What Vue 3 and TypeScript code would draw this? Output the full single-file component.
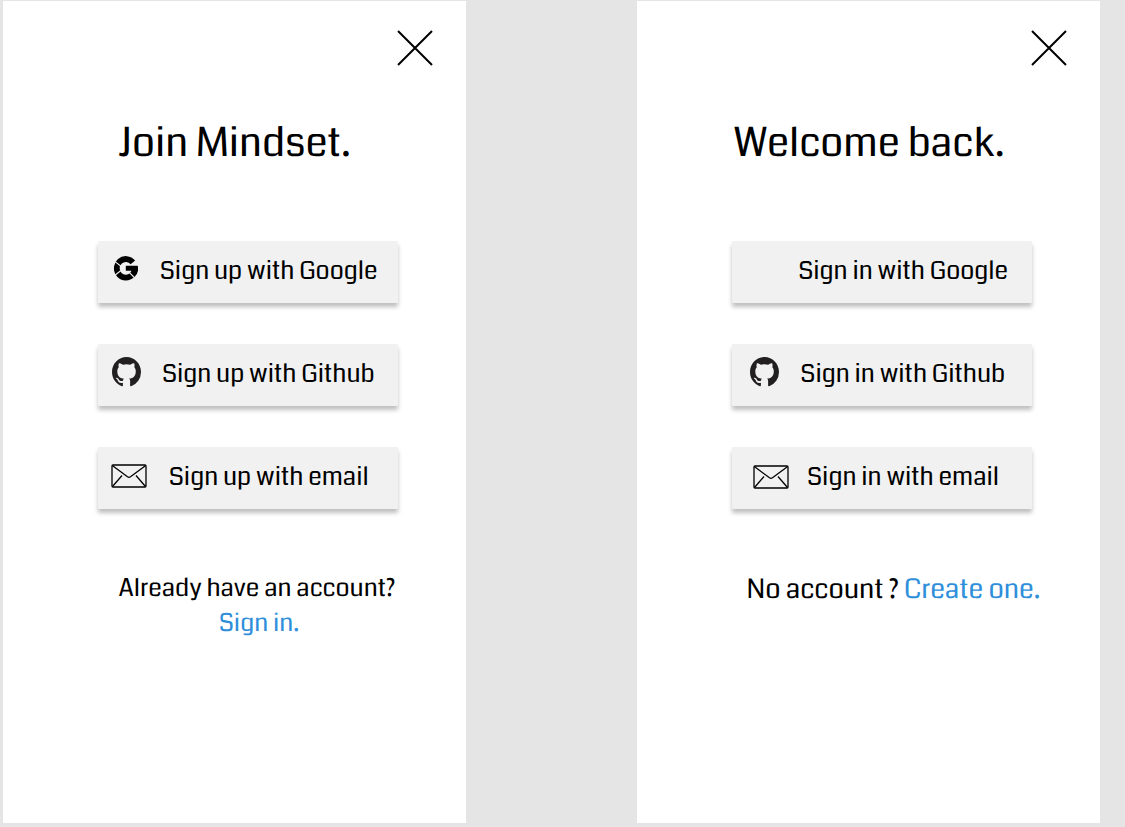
<script setup lang="ts">
type Icon = 'google' | 'github' | 'mail' | 'none'
interface Option { id: string; icon: Icon; label: string }
interface Panel { id: string; title: string; options: Option[]; prompt: string; link: string }

const panels: Panel[] = [
  {
    id: 'join',
    title: 'Join Mindset.',
    options: [
      { id: 'up-google', icon: 'google', label: 'Sign up with Google' },
      { id: 'up-github', icon: 'github', label: 'Sign up with Github' },
      { id: 'up-mail', icon: 'mail', label: 'Sign up with email' },
    ],
    prompt: 'Already have an account?',
    link: 'Sign in.',
  },
  {
    id: 'welcome',
    title: 'Welcome back.',
    options: [
      { id: 'in-google', icon: 'none', label: 'Sign in with Google' },
      { id: 'in-github', icon: 'github', label: 'Sign in with Github' },
      { id: 'in-mail', icon: 'mail', label: 'Sign in with email' },
    ],
    prompt: 'No account ?',
    link: 'Create one.',
  },
]
</script>

<template>
  <main class="board">
    <section v-for="p in panels" :key="p.id" class="panel" :class="p.id">
      <svg class="close" viewBox="0 0 36 36" aria-label="Close">
        <path d="M1 1L35 35M35 1L1 35" fill="none" stroke="#000" stroke-width="2" />
      </svg>
      <h1 class="title">{{ p.title }}</h1>
      <div class="options">
        <button v-for="o in p.options" :key="o.id" class="option" :class="o.id" type="button">
          <span class="icon">
            <svg v-if="o.icon === 'google'" class="google" viewBox="0 0 24 25">
              <path d="M18.9 6.4A9.1 9.3 0 1 0 18.2 19" fill="none" stroke="#000" stroke-width="5.8" />
              <path d="M11.8 9.8H23.7A12 12 0 0 1 20 21.7L15.6 17.2Q16.9 16.4 17.4 14.8H11.8Z" />
              <path d="M1 5.6L7 10.2M1 19.2L6.6 14.8M15 16.2L20.8 22" fill="none" stroke="#f1f1f1" stroke-width="1.1" />
            </svg>
            <svg v-else-if="o.icon === 'github'" class="github" viewBox="0 0 16 16" preserveAspectRatio="none">
              <path fill="#211f1f" d="M8 0C3.58 0 0 3.58 0 8c0 3.54 2.29 6.53 5.47 7.59.4.07.55-.17.55-.38 0-.19-.01-.82-.01-1.49-2.01.37-2.53-.49-2.69-.94-.09-.23-.48-.94-.82-1.13-.28-.15-.68-.52-.01-.53.63-.01 1.08.58 1.23.82.72 1.21 1.87.87 2.33.66.07-.52.28-.87.51-1.07-1.78-.2-3.64-.89-3.64-3.95 0-.87.31-1.59.82-2.15-.08-.2-.36-1.02.08-2.12 0 0 .67-.21 2.2.82.64-.18 1.32-.27 2-.27s1.36.09 2 .27c1.53-1.04 2.2-.82 2.2-.82.44 1.1.16 1.92.08 2.12.51.56.82 1.27.82 2.15 0 3.07-1.87 3.75-3.65 3.95.29.25.54.73.54 1.48 0 1.07-.01 1.93-.01 2.2 0 .21.15.46.55.38A8.01 8.01 0 0 0 16 8c0-4.42-3.58-8-8-8z" />
            </svg>
            <svg v-else-if="o.icon === 'mail'" class="mail" viewBox="0 0 36 24">
              <g fill="none" stroke="#000" stroke-width="1.3">
                <rect x="1" y="1" width="34" height="22" rx="1" />
                <path d="M1.3 1.5L16.5 12.8Q18 13.8 19.5 12.8L34.7 1.5M1.5 22.5L11 11.5M34.5 22.5L25 11.5" />
              </g>
            </svg>
          </span>
          <span class="label">{{ o.label }}</span>
        </button>
      </div>
      <p class="footer"><span class="prompt">{{ p.prompt }}</span> <a class="link">{{ p.link }}</a></p>
    </section>
  </main>
</template>

<style>
body { margin: 0; background: #e5e5e5; }
</style>

<style scoped>
.board {
  display: flex;
  gap: 171.6px;
  height: 827px;
  padding: .7px 0 0 3px;
  box-sizing: border-box;
  overflow: hidden;
  background: #e5e5e5;
  font-family: Coda, Roboto, "Liberation Sans", sans-serif;
  text-rendering: geometricPrecision;
  color: #000;
}
.panel { display: flex; flex-direction: column; flex: none; width: 462.86px; height: 822.3px; background: #fff; }
.close { width: 36px; height: 36px; margin: 29.3px 0 0 393.7px; }
.title { margin: 52px 0 0 114.8px; font-size: 40.15px; line-height: 52px; font-weight: 400; white-space: nowrap; }
.welcome .title { margin-left: 96px; }
.options { display: flex; flex-direction: column; gap: 40.4px; margin: 71px 0 0 94.8px; }
.option {
  display: flex;
  align-items: center;
  width: 300px;
  height: 62.5px;
  padding: 0 0 3.6px;
  border: 0;
  border-radius: 1px;
  background: #f1f1f1;
  box-shadow: 0 4px 4px rgba(0, 0, 0, .25);
  font: inherit;
  font-size: 24.6px;
  color: #000;
  white-space: nowrap;
}
.icon { display: flex; flex: none; align-items: center; width: 62px; padding-left: 14px; box-sizing: border-box; }
.google { width: 24px; height: 25px; margin: -3px 0 0 2.1px; }
.github { width: 29px; height: 30px; margin-top: -2.4px; }
.mail { width: 36px; height: 24px; margin-top: 0; margin-left: -1px; }
.up-github .icon { width: 64.1px; }
.up-mail .icon { width: 71px; }
.in-google .icon { width: 66px; }
.in-github .icon { width: 68.1px; padding-left: 18px; }
.in-mail .icon { width: 74.8px; padding-left: 22px; }
.in-mail .mail { margin-top: 2px; }
.footer { margin: 62px 0 0 115.5px; font-size: 24.6px; line-height: 35px; white-space: nowrap; }
.join .footer { display: flex; flex-direction: column; }
.join .link { margin-left: 100.3px; }
.welcome .footer { margin: 63.5px 0 0 109px; font-size: 26.8px; }
.link { color: #2f8fdb; }
</style>
